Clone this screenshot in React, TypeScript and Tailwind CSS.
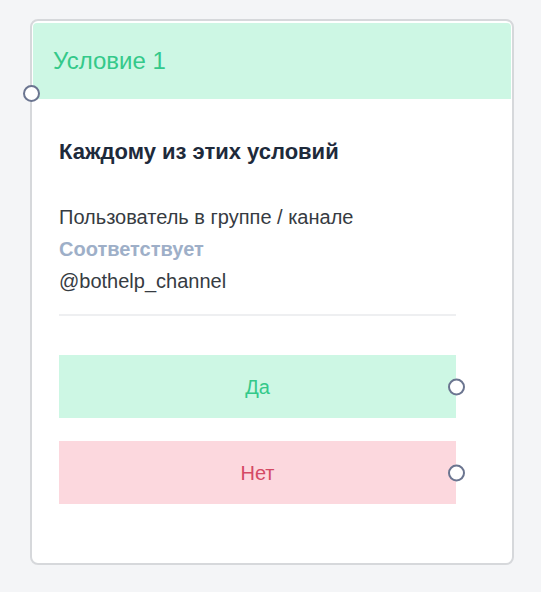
import React from "react";

const font = { fontFamily: '"Liberation Sans", Arial, sans-serif' };

function Port({ className }: { className: string }) {
  return (
    <span
      className={`absolute h-[17px] w-[17px] rounded-full border-2 border-[#6b7590] bg-white ${className}`}
    />
  );
}

function Outcome({ label, tone }: { label: string; tone: "yes" | "no" }) {
  const styles =
    tone === "yes" ? "bg-[#cdf7e4] text-[#34c98a]" : "bg-[#fcd8de] text-[#d44a64]";
  return (
    <div className={`relative flex h-[63px] items-center justify-center text-[20px] ${styles}`}>
      {label}
      <Port className="right-[-9px] top-1/2 -translate-y-1/2" />
    </div>
  );
}

export default function App() {
  return (
    <div className="min-h-[592px] w-full bg-[#f4f5f7] pl-[30px] pt-[19px]" style={font}>
      <div className="relative h-[546px] w-[484px] rounded-[8px] border-2 border-[#d6d8db] bg-white px-px pt-[2px]">
        <div className="flex h-[76px] items-center rounded-t-[4px] bg-[#cdf7e4] pl-[20px] text-[24px] text-[#34c98a]">
          Условие 1
        </div>
        <Port className="left-[-9px] top-[64px]" />

        <div className="pl-[26px] pr-[54px]">
          <div className="mt-[39px] text-[22px] font-bold leading-[28px] text-[#1e2a3b]">
            Каждому из этих условий
          </div>
          <div className="mt-[35px] text-[20px] leading-[32px] text-[#363b42]">
            <div>Пользователь в группе / канале</div>
            <div className="font-bold text-[#9eafc8]">Соответствует</div>
            <div>@bothelp_channel</div>
          </div>
          <div className="mt-[17px] h-[2px] w-[397px] bg-[#eeeff1]" />
          <div className="mt-[39px] flex w-[397px] flex-col gap-[23px]">
            <Outcome label="Да" tone="yes" />
            <Outcome label="Нет" tone="no" />
          </div>
        </div>
      </div>
    </div>
  );
}
